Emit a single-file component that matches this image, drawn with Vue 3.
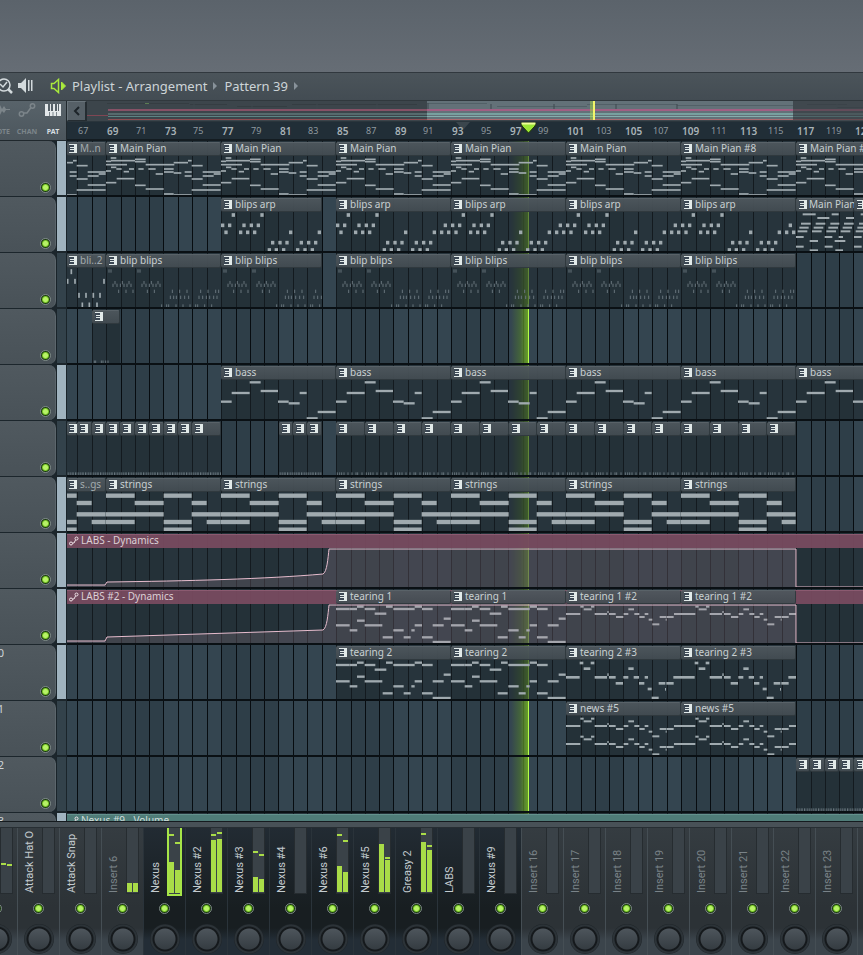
<script setup>
import { ref } from 'vue'

// One bar is 115/8 px wide; bar 69 sits 39px into the lane.
const barX = (bar) => Math.floor(39.5 + ((bar - 69) * 115) / 8)

// Note lists hold [start, end, middle] in thirds of a pixel from the clip's corner.
const bars = (ox, oy, h, list) => list.map(([a, b, y]) => ({ x: a - ox, w: b - a, y: y - oy - h / 2, h }))
const dots = (ox, oy, w, h, rows) =>
  Object.entries(rows).flatMap(([y, xs]) => xs.map((x) => ({ x: x - ox - w / 2, w, y: Number(y) - oy - h / 2, h })))

const piano = bars(109, 213, 5, [
  [123, 140, 264], [109, 124, 274], [124, 196, 272], [196, 228, 268], [196, 228, 275], [109, 172, 284],
  [124, 140, 292], [140, 156, 297], [162, 178, 305], [178, 193, 297], [109, 124, 303], [228, 283, 284],
  [206, 222, 297], [236, 258, 297], [258, 280, 312], [283, 314, 284], [283, 312, 297], [283, 312, 306],
  [312, 355, 278], [355, 366, 272], [312, 335, 309], [345, 366, 306], [345, 366, 318], [366, 399, 287],
  [399, 453, 306], [399, 432, 318], [432, 453, 312], [366, 453, 360], [399, 453, 345], [366, 399, 327],
  [141, 194, 326], [109, 140, 338], [196, 228, 346], [228, 282, 357], [283, 312, 372], [312, 366, 375]
])
const pianoB = bars(649, 21, 6, [
  [669, 708, 73], [756, 777, 73], [713, 749, 84], [799, 840, 84], [664, 693, 101], [708, 737, 101],
  [752, 779, 101], [793, 822, 101], [659, 687, 113], [702, 731, 113], [746, 775, 113], [789, 817, 113],
  [654, 683, 124], [697, 726, 124], [740, 769, 124], [783, 812, 124], [649, 672, 141], [735, 758, 141],
  [777, 790, 141], [690, 715, 153], [765, 797, 153], [649, 672, 170], [735, 759, 170], [690, 715, 181],
  [767, 790, 181]
])
const arp = dots(109, 21, 10, 11, {
  75: [146, 232], 106: [114, 135, 178, 200, 221, 437], 127: [124, 168, 189, 210, 318, 404, 426, 447],
  158: [264, 286, 307, 350, 372, 393], 180: [254, 275, 297, 339, 361, 383]
})
const blips = dots(109, 189, 3, 10, {
  243: [118, 124, 205, 211], 278: [136, 158, 178, 223, 245, 265],
  286: [130, 142, 152, 163, 172, 184, 217, 229, 239, 250, 259, 271],
  304: [147, 169, 190, 233, 254, 308, 330, 352, 393, 415, 438, 447],
  322: [302, 312, 320, 333, 345, 357, 388, 399, 410, 420, 432, 442],
  348: [276, 291, 297, 319, 340, 361, 378, 384, 405, 426]
})
const blipsEnd = dots(201, 189, 5, 15, {
  245: [214], 274: [203, 225, 312], 316: [237, 258, 280, 300], 345: [247, 268, 291]
})
const bassNotes = bars(109, 15, 7, [
  [109, 141, 125], [141, 195, 99], [195, 228, 67], [228, 280, 93], [280, 312, 125], [312, 345, 130],
  [345, 366, 99], [366, 399, 175], [399, 453, 156]
])
const stringNotes = bars(109, 351, 13, [
  [109, 195, 407], [195, 282, 429], [282, 366, 407], [366, 411, 429], [109, 282, 463], [366, 453, 463],
  [109, 195, 486], [411, 453, 486], [282, 366, 486], [282, 366, 509]
])
const tearing = bars(229, 177, 7, [
  [229, 270, 237], [270, 292, 237], [292, 312, 230], [315, 347, 237], [345, 380, 251], [379, 399, 230],
  [401, 465, 237], [465, 487, 230], [487, 519, 237], [229, 270, 286], [270, 293, 301], [292, 315, 272],
  [315, 368, 286], [369, 399, 322], [401, 432, 301], [432, 453, 322], [455, 465, 301], [465, 487, 286],
  [487, 519, 322], [519, 552, 286], [552, 573, 266], [519, 573, 336]
])
const melody = [
  [19, 62, 252], [62, 72, 230], [72, 96, 238], [94, 104, 230], [105, 142, 252], [143, 147, 246],
  [148, 168, 252], [169, 191, 261], [192, 206, 252], [206, 223, 238], [224, 239, 252], [239, 255, 261],
  [255, 266, 252], [267, 278, 269], [278, 299, 283], [300, 320, 261], [318, 321, 269], [321, 342, 261],
  [343, 364, 252]
]
const tearingHigh = bars(19, 177, 6, melody)
const news = [...tearingHigh, ...bars(19, 123, 6, melody)]
const tearingLow = bars(19, 345, 8, [
  [19, 60, 442], [60, 71, 399], [72, 92, 416], [93, 104, 399], [105, 142, 442], [143, 147, 434],
  [148, 168, 442], [168, 190, 460], [191, 206, 442], [206, 222, 416], [222, 238, 442], [238, 254, 460],
  [255, 265, 442], [264, 276, 477], [276, 297, 504], [297, 317, 460], [316, 319, 478], [320, 342, 460],
  [341, 364, 442]
])
const hats = Array.from({ length: 10 }, (_, i) => ({ x: i * 5 - 1, w: 2 + (i % 2), y: 154, h: 10 }))
const hatsLong = Array.from({ length: 18 }, (_, i) => ({ x: i * 5 - 1, w: 2 + (i % 2), y: 154, h: 10 }))
const hatsLoose = dots(0, 0, 3, 10, { 159: [4, 11, 17, 24, 36, 48, 60, 65, 78] })
const fill = dots(277, 357, 3, 9, { 516: [284, 288, 305, 310, 318, 325] })

const clip = (from, to, label, notes, extra = {}) => {
  const left = from < 67 ? 0 : barX(from)
  return { left, width: barX(to) - left, label, notes, off: 0, ...extra }
}
const run = (starts, label, notes, len = 8, extra = {}) =>
  starts.map((s) => clip(s, s + len, label, notes, extra))

const eights = [85, 93, 101, 109]
const tracks = ref([
  { strip: true, clips: [
    clip(66, 69, 'M..n', piano, { off: 76, faded: true }),
    ...run([69, 77, 85, 93, 101], 'Main Pian', piano),
    ...run([109, 117], 'Main Pian #8', piano)
  ] },
  { strip: true, clips: [
    clip(77, 84, 'blips arp', arp), ...run(eights, 'blips arp', arp),
    clip(117, 121, 'Main Pian', pianoB, { tight: true }), clip(121, 125, '', pianoB, { tight: true })
  ] },
  { strip: false, clips: [
    clip(66, 69, 'bli..2', blipsEnd, { faded: true }), clip(69, 77, 'blip blips', blips, { soft: true }),
    clip(77, 84, 'blip blips', blips, { soft: true }), ...run(eights, 'blip blips', blips, 8, { soft: true })
  ] },
  { strip: false, clips: [clip(68, 70, '', fill, { soft: true })] },
  { strip: true, clips: run([77, 85, 93, 101, 109, 117], 'bass', bassNotes) },
  { strip: false, clips: [
    clip(66, 67, '', hats, { faded: true, soft: true }),
    ...run([67, 68, 69, 70, 71, 72, 73, 74], '', hats, 1, { soft: true }),
    clip(75, 77, '', hatsLong, { soft: true }),
    ...run([81, 82, 83], '', hats, 1, { soft: true }),
    ...run(Array.from({ length: 16 }, (_, i) => 85 + i * 2), '', hatsLoose, 2, { soft: true })
  ] },
  { strip: true, clips: [
    clip(66, 69, 's..gs', stringNotes, { off: 76, faded: true }),
    ...run([69, 77, ...eights], 'strings', stringNotes)
  ] },
  { strip: true, clips: [], auto: {
    label: 'LABS - Dynamics',
    line: 'M0 52H38L40 49C120 48 200 46 256 41C260 39 261 25 262 16H729V54H1800'
  } },
  { strip: true, auto: {
    label: 'LABS #2 - Dynamics',
    line: 'M0 52H38L40 48L256 41C260 39 261 25 262 16H729V54H1800'
  }, clips: [...run([85, 93], 'tearing 1', tearing), ...run([101, 109], 'tearing 1 #2', tearingHigh)] },
  { strip: true, num: '10', clips: [
    ...run([85, 93], 'tearing 2', tearing), ...run([101, 109], 'tearing 2 #3', tearingLow)
  ] },
  { strip: false, num: '11', clips: run([101, 109], 'news #5', news) },
  { strip: false, num: '12', clips: run([117, 118, 119, 120, 121], '', hats, 1, { soft: true }) },
  { strip: true, num: '13', clips: [], auto: { label: 'Nexus #9 - Volume', teal: true } }
].map((t) => ({ on: true, ...t })))

const ruler = Array.from({ length: 40 }, (_, i) => 67 + i * 2)

const channel = (name, group = false, levels = [0, 0], peaks = [0, 0], selected = false) => ({
  name, group, levels, peaks, selected, on: true, pan: 50
})
const channels = ref([
  channel('', false, [0, 0], [27, 26]),
  channel('Attack Hat O'),
  channel('Attack Snap'),
  channel('Insert 6', false, [9, 9]),
  channel('Nexus', true, [31, 23], [57, 49], true),
  channel('Nexus #2', true, [52, 53], [56, 58]),
  channel('Nexus #3', true, [15, 13], [39, 36]),
  channel('Nexus #4', true),
  channel('Nexus #6', true, [26, 20], [56, 50]),
  channel('Nexus #5', true, [46, 32], [46, 33]),
  channel('Greasy 2', true, [50, 42], [57, 45]),
  channel('LABS', true),
  channel('Nexus #9', true),
  ...Array.from({ length: 24 }, (_, i) => channel(`Insert ${16 + i}`))
])
</script>

<template>
  <main class="studio">
    <div class="desk"></div>
    <section class="playlist">
      <header class="titlebar">
        <button class="tool zoomer" aria-label="Zoom">
          <svg width="14" height="18" viewBox="0 0 14 18" fill="none" stroke="#d3dadd">
            <circle cx="4" cy="8" r="6" stroke-width="1.5" /><path d="M8 12l4 4" stroke-width="2.5" /><path d="M0 7l3 3 4-5" stroke-width="1.5" />
          </svg>
        </button>
        <button class="tool listen" aria-label="Preview">
          <svg width="16" height="16" viewBox="0 0 16 16" fill="#d3dadd">
            <path d="M0 5h3l5-5v15l-5-5H0z" /><path d="M10 2h1.500v11H10zM13 2h1.500v11H13z" />
          </svg>
        </button>
        <button class="tool play" aria-label="Playlist options">
          <svg width="17" height="16" viewBox="0 0 17 16" fill="none" stroke="#a9ea3c" stroke-width="1.5">
            <path d="M1.500 5.500h2.500L8.500 1.500v13l-4.500-4H1.500z" /><path d="M11.500 4l4 4-4 4z" fill="#a9ea3c" stroke-width="1" />
          </svg>
        </button>
        <span class="crumb">Playlist - Arrangement</span><i class="arrow"></i>
        <span class="crumb">Pattern 39</span><i class="arrow"></i>
      </header>

      <div class="head">
        <nav class="modes">
          <button class="mode note"><svg width="20" height="16" viewBox="0 0 20 16" fill="#7c858a"><path d="M0 7h4l1-3 2 1 1-5 2 3 2 4 2-3 2 3h4v1h-4l-2 3-2-2-2 4-2 2-1-4-2 1-1-4H0z" /></svg><span>NOTE</span></button>
          <button class="mode chan"><svg width="18" height="16" viewBox="0 0 18 16" fill="none" stroke="#7c858a" stroke-width="1.500"><circle cx="3.500" cy="12" r="2.200" /><circle cx="14.500" cy="4" r="2.200" /><path d="M5.500 11h3.500l4-5.500" /></svg><span>CHAN</span></button>
          <button class="mode pat"><svg width="16" height="16" viewBox="0 0 16 16" fill="#e3e8ea"><path d="M0 2h3v7h2v-7h1v7h2v-7h2v7h2v-7h1v7h1v-7h2v12H0z" /><path d="M4.500 10v4M8 10v4M11.500 10v4" stroke="#7b858b" /></svg><span>PAT</span></button>
        </nav>
        <div class="overview">
          <div class="mapbar">
            <button class="back" aria-label="Scroll left"><svg width="8" height="12" viewBox="0 0 8 12" fill="none" stroke="#1d2429" stroke-width="2"><path d="M6 2L2 6l4 4" /></svg></button>
            <svg class="map" height="20">
              <rect width="100%" height="20" fill="#3c454b" />
              <rect x="706" width="100%" height="20" fill="#40484e" />
              <rect x="340" width="366" height="19" fill="#637178" />
              <path d="M20 2.500H102M103 3.500H140M150 5.500H200M205 3.500H330" stroke="#353d42" />
              <path d="M340 2.500H400M410 5.500H500M500 3.500H590M590 4.500H706" stroke="#526067" />
              <path d="M720 3.500H760M750 6.500H1800" stroke="#363e44" />
              <path d="M107 3V8M165 3V8M230 3V9M290 3V9M341 2V9M404 3V10M467 3V9M529 3V9M590 3V9M750 3V9" stroke="#3f494f" />
              <rect x="58" y="2" width="4" height="1" fill="#5c7d52" />
              <path d="M0 14.500H21" stroke="#804653" />
              <rect x="21" y="8" width="100%" height="2" fill="#865166" />
              <rect x="21" y="12" width="100%" height="2" fill="#566a6d" />
              <rect x="21" y="15" width="100%" height="1" fill="#5c8484" />
              <rect x="21" y="18" width="100%" height="1" fill="#904d52" />
              <rect x="340" y="8" width="366" height="2" fill="#a15f83" />
              <rect x="340" y="12" width="366" height="2" fill="#78a09f" />
              <rect x="340" y="15" width="366" height="1" fill="#86aead" />
              <rect x="340" y="18" width="366" height="1" fill="#ae6b70" />
              <rect x="706" y="1" width="1800" height="18" fill="#40484e" opacity=".5" />
              <rect x="503" width="3" height="19" fill="#9fd34a" opacity=".5" /><rect x="506" width="2" height="19" fill="#f2f56a" />
            </svg>
          </div>
          <div class="ruler">
            <svg class="marker ghost" width="16" height="10" viewBox="0 0 16 10"><path d="M1 0h14L8 8z" fill="#3b464d" /></svg>
            <span v-for="b in ruler" :key="b" class="tick" :class="{ major: b % 4 === 1 }" :style="{ left: barX(b) + 1 + 'px' }">{{ b }}</span>
            <svg class="marker now" width="17" height="12" viewBox="0 0 17 12"><path d="M1 1h15l-1 3-6.500 7L2 4z" fill="#9be636" stroke="#1d3408" /><path d="M1.500 1.500h14" stroke="#efff9a" stroke-width="2" /></svg>
          </div>
        </div>
      </div>

      <div class="tracks">
        <div v-for="(t, i) in tracks" :key="i" class="track">
          <div class="card">
            <span class="num">{{ t.num }}</span>
            <input v-model="t.on" class="led" type="checkbox" :aria-label="`Track ${i + 1}`" />
          </div>
          <div class="strip" :class="{ bright: t.strip }"></div>
          <div class="lane">
            <div class="playhead"></div>
            <div v-if="t.auto" class="auto" :class="{ teal: t.auto.teal }">
              <div class="autohead">
                <svg width="10" height="10" viewBox="0 0 10 10" fill="none" stroke="#efe3e8"><circle cx="2" cy="7.500" r="1.500" /><circle cx="7.500" cy="2.500" r="1.500" /><path d="M3.500 7h1.500l1.500-3" /></svg>
                <span>{{ t.auto.label }}</span>
              </div>
            </div>
            <article v-for="(c, j) in t.clips" :key="j" class="clip" :class="{ faded: c.faded, tight: c.tight, glass: t.auto }" :style="{ left: c.left + 'px', width: c.width + 'px' }">
              <div class="cliphead">
                <svg class="keys" width="8" height="9" viewBox="0 0 8 9" shape-rendering="crispEdges"><path d="M0 0h5v9H0z" fill="#3c4854" /><path d="M5 0h3v9H5zM0 0h5v1H0zM1 3h4v1H1zM1 5h4v1H1zM0 8h5v1H0z" fill="#e2eae9" /></svg>
                <span v-if="c.label">{{ c.label }}</span>
              </div>
              <svg class="notes" :class="{ soft: c.soft }" :width="c.width" height="55" :viewBox="`${c.off * 3} 0 ${c.width * 3} 165`">
                <rect v-for="(n, k) in c.notes" :key="k" :x="n.x" :y="n.y" :width="n.w" :height="n.h" />
              </svg>
            </article>
            <svg v-if="t.auto && t.auto.line" class="curve" height="55">
              <path :d="t.auto.line + 'V55H0z'" fill="#b3909f" fill-opacity=".2" />
              <path :d="t.auto.line" fill="none" stroke="#e6bccd" />
            </svg>
          </div>
        </div>
      </div>
    </section>

    <section class="mixer">
      <div class="edge"></div>
      <div class="channels">
        <div v-for="(c, i) in channels" :key="i" class="channel" :class="{ group: c.group, named: !c.name.startsWith('Insert') }">
          <div class="top">
            <span class="name">{{ c.name }}</span>
            <div class="meter" :class="{ selected: c.selected }">
              <div v-for="s in 2" :key="s" class="side">
                <i class="level" :style="{ height: c.levels[s - 1] + 'px' }"></i>
                <i v-if="c.peaks[s - 1]" class="peak" :style="{ bottom: c.peaks[s - 1] + 'px' }"></i>
              </div>
            </div>
          </div>
          <input v-model="c.on" class="led" type="checkbox" :aria-label="`${c.name} enabled`" />
          <input v-model="c.pan" class="knob" type="range" :aria-label="`${c.name} pan`" />
        </div>
      </div>
    </section>
  </main>
</template>

<style>
body { background: #2b3338; }
</style>

<style scoped>
.studio {
  display: flex;
  flex-direction: column;
  height: 100vh;
  overflow: hidden;
  font-family: "Noto Sans", "Open Sans", sans-serif;
  color: #cdd4d7;
}
.studio * { box-sizing: border-box; }
button { padding: 0; border: 0; background: none; color: inherit; font: inherit; }
.desk { flex: 0 0 72px; background: linear-gradient(#5b636b, #666d75); }

.playlist { flex: 1 1 0; min-height: 0; display: flex; flex-direction: column; background: #151e24; }
.titlebar {
  flex: 0 0 28px;
  display: flex;
  align-items: center;
  padding-bottom: 1px;
  border-top: 1px solid #31383e;
  background: linear-gradient(#4b545a, #434c53);
  font-size: 13px;
  line-height: 20px;
  white-space: nowrap;
}
.tool { display: flex; }
.zoomer { width: 18px; }
.listen { width: 32px; }
.play { width: 22px; }
.arrow { border: 4px solid transparent; border-left-color: #88929a; border-right: 0; margin: 0 7px 0 6px; }

.head { flex: 0 0 41px; display: grid; grid-template-columns: 67px 1fr; border-top: 1px solid #30383d; background: #353f45; }
.modes {
  display: flex;
  justify-content: flex-end;
  overflow: hidden;
  background: linear-gradient(#58636a, #4c565d);
  border-right: 1px solid #20282d;
  border-bottom: 1px solid #20282d;
}
.mode { flex: 0 0 26px; display: flex; flex-direction: column; align-items: center; justify-content: space-between; padding: 1px 0 3px; color: #7c858a; font-size: 7px; line-height: 10px; font-weight: 700; }
.mode.note { flex-basis: 20px; align-items: flex-end; padding-right: 4px; }
.mode.pat { color: #d8dfe2; }
.overview { min-width: 0; }
.mapbar { display: flex; height: 20px; }
.back { flex: 0 0 20px; display: flex; align-items: center; justify-content: center; background: #566067; border: 1px solid #69747b; border-right: 2px solid #252d32; border-bottom-color: #252d32; }
.map { flex: 1; min-width: 0; }
.ruler { position: relative; height: 20px; overflow: hidden; background: #212e37; border-top: 1px solid #2a353c; border-bottom: 2px solid #141c21; }
.tick { position: absolute; bottom: 0; font-size: 9px; line-height: 16px; color: #8f999f; }
.tick.major { font-size: 10px; line-height: 16px; color: #a9b3b8; font-weight: 600; }
.marker { position: absolute; top: 0; }
.ghost { left: 388px; }
.now { left: 453px; }

.tracks { flex: 1 1 0; min-height: 0; overflow: hidden; }
.track { display: grid; grid-template-columns: 56px 11px 1fr; height: 56px; background: #1c262c; }
.card {
  display: flex;
  justify-content: space-between;
  height: 55px;
  padding-right: 4px;
  border-radius: 0 7px 7px 0;
  border-right: 1px solid #5c666c;
  background: linear-gradient(#50595f, #495258);
}
.num { width: 4px; display: flex; justify-content: flex-end; overflow: hidden; font-size: 11px; line-height: 16px; }
.card .led { align-self: flex-end; margin-bottom: 3px; }
.led {
  appearance: none;
  width: 11px;
  height: 11px;
  margin: 0;
  border: 1px solid #7d8a86;
  border-radius: 50%;
  background: #23381a;
}
.led:checked { background: radial-gradient(circle, #b8f268 0 2px, #79c828 3px, #1c3a10 4px); }
.strip { height: 54px; border-left: 1px solid #1a242a; border-right: 1px solid #1a242a; background: #33424b; }
.strip.bright { background: #a0b3bf; }
.lane {
  position: relative;
  min-width: 0;
  overflow: hidden;
  border-bottom: 2px solid #0a1014;
  background-position: 39px 0;
  background-size: 115px 100%;
  background-image:
    linear-gradient(90deg, #070c10 1px, transparent 1px 15px, #070c10 15px 16px, transparent 16px 29px, #070c10 29px 30px, transparent 30px 43px, #070c10 43px 44px, transparent 44px 57px, #070c10 57px 58px, transparent 58px 72px, #070c10 72px 73px, transparent 73px 86px, #070c10 86px 87px, transparent 87px 101px, #070c10 101px 102px, transparent 102px),
    linear-gradient(90deg, #2e3e48 57px, #344550 57px);
}
.playhead { position: absolute; top: 0; bottom: 0; left: 444px; width: 18px; border-right: 1px solid #b6ff4c; background: linear-gradient(90deg, transparent, #4f7a2c99 55%, #6ba524ee); }
.clip { position: absolute; top: 0; height: 55px; overflow: hidden; background: rgba(30, 39, 43, .55); }
.cliphead {
  display: flex;
  align-items: center;
  gap: 3px;
  height: 14px;
  margin-top: 1px;
  padding: 0 0 1px 3px;
  border: 1px solid #30393e;
  border-top-color: #596268;
  border-left: 0;
  border-radius: 2px;
  background: linear-gradient(rgba(78, 87, 93, .94), rgba(67, 76, 82, .94));
  color: #c9d0d2;
  font-size: 10px;
  line-height: 10px;
  white-space: nowrap;
}
.cliphead span, .autohead span { height: 13px; line-height: 12px; }
.keys { flex: none; }
.tight .cliphead { gap: 2px; }
.faded .cliphead { color: #a3abae; padding-left: 2px; }
.glass { background: none; }
.notes { position: absolute; top: 0; left: 0; fill: #a0aaaf; }
.notes.soft { fill: #66747b; }
.auto { position: absolute; top: 0; left: 0; right: 0; height: 55px; background: rgba(30, 39, 43, .55); }
.autohead {
  display: flex;
  align-items: center;
  gap: 2px;
  height: 14px;
  margin-top: 1px;
  padding: 0 0 2px 2px;
  border-top: 1px solid #8b5a70;
  background: rgba(120, 74, 96, .94);
  color: #ddd0d6;
  font-size: 10px;
  line-height: 12px;
}
.teal .autohead { background: #4f7c78; border-top-color: #64928d; color: #cfdedc; }
.curve { position: absolute; top: 0; left: 0; width: 100%; }

.mixer { flex: 0 0 134px; display: flex; flex-direction: column; background: #2c3337; }
.edge { flex: 0 0 7px; background: #485157; border-top: 1px solid #151b1f; border-bottom: 1px solid #272e33; }
.channels { flex: 1; display: flex; margin-left: -25px; overflow: hidden; }
.channel {
  flex: 0 0 42px;
  display: flex;
  flex-direction: column;
  align-items: center;
  border-left: 1px solid #454e54;
  background: linear-gradient(#353c41, #2c3236 80px, #2c3236 100px, #3b444b 112px);
  color: #7a8388;
}
.channel.named { color: #c3cbcf; }
.channel.group { border-left-color: #2a333a; background: linear-gradient(#222b33, #181e21 80px, #181e21 100px, #232d36 112px); }
.top { align-self: stretch; display: flex; justify-content: space-between; height: 68px; padding: 0 4px; }
.name {
  writing-mode: vertical-rl;
  transform: rotate(180deg);
  height: 65px;
  font-family: "Roboto", sans-serif;
  font-size: 11px;
  line-height: 16px;
  white-space: nowrap;
}
.meter { display: flex; gap: 1px; height: 66px; padding: 0 0 1px; border: 1px solid #262c30; border-top: 0; background: #3a4248; }
.meter.selected { height: 68px; border: 2px solid #a6e548; border-top: 0; margin-right: -1px; }
.side { position: relative; width: 5px; display: flex; align-items: flex-end; }
.level { width: 5px; background: #a9dc48; }
.peak { position: absolute; left: 0; width: 5px; height: 2px; background: #a9dc48; }
.channel .led { margin-top: 7px; }
.knob {
  appearance: none;
  width: 30px;
  height: 30px;
  margin: 10px 0 0;
  flex: none;
  border-radius: 50%;
  background: radial-gradient(circle at 50% 50%, transparent 10px, #15191c 11px 12px, #2c3338 13px 14px, #1f2529 15px), linear-gradient(#535b62, #2f363b);
}
.knob::-webkit-slider-thumb { appearance: none; width: 1px; height: 1px; opacity: 0; }
</style>
